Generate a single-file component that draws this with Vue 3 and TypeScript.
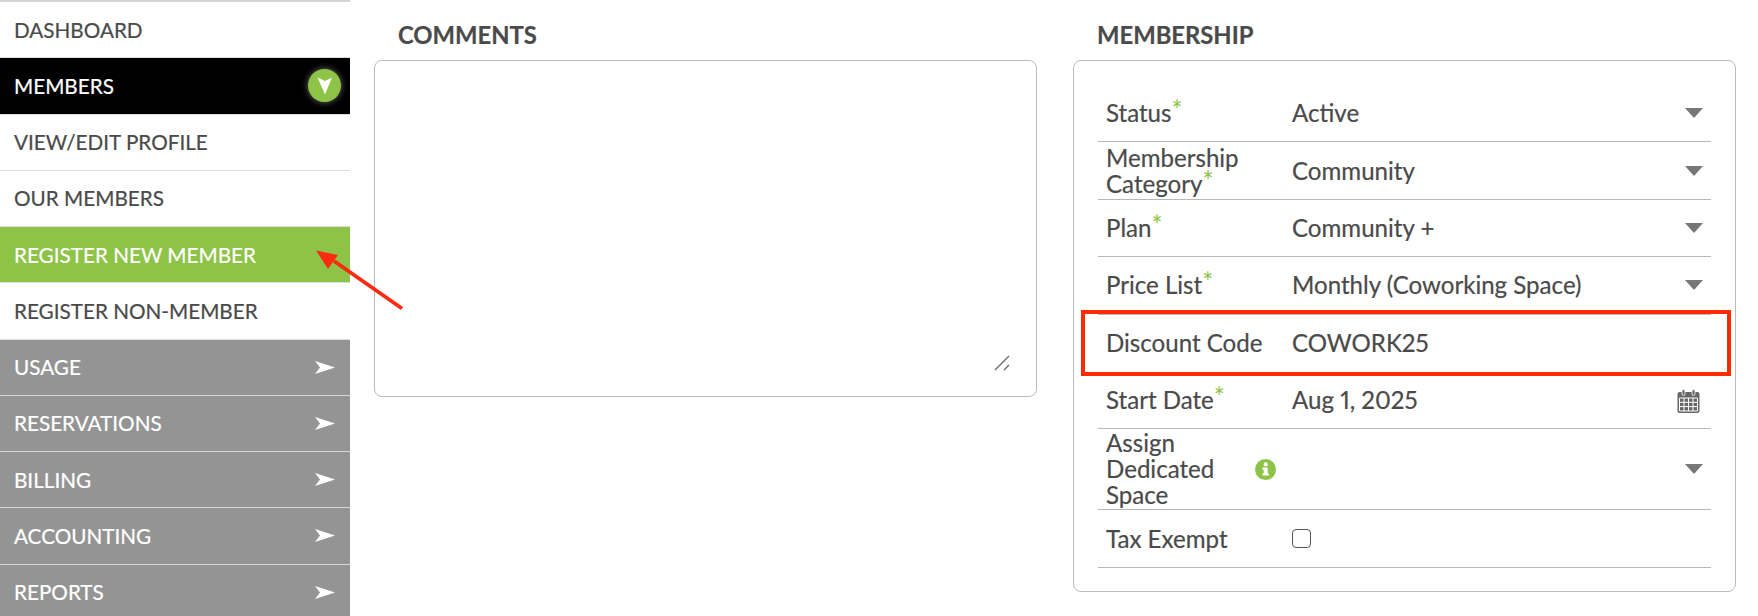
<template>
  <div class="page">
    <nav class="sidebar">
      <div
        v-for="item in navItems"
        :key="item.label"
        class="nav-item"
        :class="item.kind"
      >
        <span>{{ item.label }}</span>
        <span v-if="item.kind === 'active'" class="open-badge">
          <svg width="16" height="18" viewBox="0 0 16 18"><path d="M0.5 0.5 L8 4 L15 0.5 L8 17.5 Z" fill="#fff" /></svg>
        </span>
        <svg v-if="item.kind === 'section'" class="chevron" width="20" height="13" viewBox="0 0 20 13"><path d="M0 0 L20 6.5 L0 13 L5 6.5 Z" fill="#fff" /></svg>
      </div>
    </nav>

    <main class="content">
      <section class="column">
        <h2>COMMENTS</h2>
        <div class="card comments">
          <svg class="resize" width="16" height="16" viewBox="0 0 16 16">
            <path d="M1 15 L15 1 M10 15 L15 10" stroke="#666" stroke-width="1.3" fill="none" />
          </svg>
        </div>
      </section>

      <section class="column">
        <h2>MEMBERSHIP</h2>
        <div class="card membership">
          <div
            v-for="row in rows"
            :key="row.label"
            class="row"
            :class="{ tall: row.tall, flat: row.flat }"
          >
            <div class="label">
              <span class="label-text">{{ row.label }}<sup v-if="row.required">*</sup></span>
              <svg v-if="row.info" class="info" width="21" height="21" viewBox="0 0 21 21">
                <circle cx="10.5" cy="10.5" r="10.5" fill="#8dc346" />
                <circle cx="10.7" cy="5.4" r="2.1" fill="#fff" />
                <path d="M7.4 8.6 H12.7 V14.4 H14 V16.6 H7.4 V14.4 H8.7 V10.8 H7.4 Z" fill="#fff" />
              </svg>
            </div>
            <div class="value">
              <span>{{ row.value }}</span>
              <span v-if="row.control === 'checkbox'" class="checkbox"></span>
              <span v-if="row.control === 'select'" class="caret"></span>
              <svg v-if="row.control === 'date'" class="calendar" width="23" height="24" viewBox="0 0 23 24">
                <rect x="0.5" y="3" width="22" height="21" rx="2" fill="#666" />
                <rect x="5" y="0.5" width="3" height="6" rx="1.5" fill="#666" stroke="#fff" stroke-width="0.8" />
                <rect x="15" y="0.5" width="3" height="6" rx="1.5" fill="#666" stroke="#fff" stroke-width="0.8" />
                <path
                  d="M2.5 9 H20.5 V22 H2.5 Z M7 9 V22 M11.5 9 V22 M16 9 V22 M2.5 13.3 H20.5 M2.5 17.6 H20.5"
                  fill="none"
                  stroke="#fff"
                  stroke-width="1"
                />
              </svg>
            </div>
          </div>
        </div>
      </section>
    </main>

    <!-- red annotations drawn over the screenshot -->
    <div class="highlight"></div>
    <svg class="arrow" width="100" height="70" viewBox="0 0 100 70">
      <path d="M86 60.5 L18 13" stroke="#ff2a12" stroke-width="3.8" />
      <path d="M0 2.5 L22 7 L12 21 Z" fill="#ff2a12" />
    </svg>
  </div>
</template>

<script setup lang="ts">
interface NavItem {
  label: string;
  kind: 'plain' | 'active' | 'current' | 'section';
}

interface FormRow {
  label: string;
  value: string;
  required?: boolean;
  control?: 'select' | 'date' | 'checkbox';
  info?: boolean;
  tall?: boolean;
  flat?: boolean;
}

const navItems: NavItem[] = [
  { label: 'DASHBOARD', kind: 'plain' },
  { label: 'MEMBERS', kind: 'active' },
  { label: 'VIEW/EDIT PROFILE', kind: 'plain' },
  { label: 'OUR MEMBERS', kind: 'plain' },
  { label: 'REGISTER NEW MEMBER', kind: 'current' },
  { label: 'REGISTER NON-MEMBER', kind: 'plain' },
  { label: 'USAGE', kind: 'section' },
  { label: 'RESERVATIONS', kind: 'section' },
  { label: 'BILLING', kind: 'section' },
  { label: 'ACCOUNTING', kind: 'section' },
  { label: 'REPORTS', kind: 'section' },
];

const rows: FormRow[] = [
  { label: 'Status', value: 'Active', required: true, control: 'select' },
  { label: 'Membership Category', value: 'Community', required: true, control: 'select' },
  { label: 'Plan', value: 'Community +', required: true, control: 'select' },
  { label: 'Price List', value: 'Monthly (Coworking Space)', required: true, control: 'select' },
  { label: 'Discount Code', value: 'COWORK25', flat: true },
  { label: 'Start Date', value: 'Aug 1, 2025', required: true, control: 'date' },
  { label: 'Assign Dedicated Space', value: '', info: true, control: 'select', tall: true },
  { label: 'Tax Exempt', value: '', control: 'checkbox' },
];
</script>

<style scoped>
.page {
  position: relative;
  display: flex;
  width: 1758px;
  height: 616px;
  overflow: hidden;
  background: #fff;
  color: #4a4a4a;
  font-family: Lato, "Open Sans", sans-serif;
  font-variant-numeric: proportional-nums;
  font-feature-settings: "pnum" 1;
  -webkit-text-stroke: 0.2px;
}

.sidebar {
  flex: 0 0 350px;
  border-top: 2px solid #d4d4d4;
}

.nav-item {
  display: flex;
  align-items: center;
  justify-content: space-between;
  box-sizing: border-box;
  height: 56.25px;
  padding: 0 9px 0 14px;
  border-bottom: 1px solid #ddd;
  font-size: 20.7px;
}

.nav-item.active {
  background: #000;
  color: #fff;
}

.nav-item.current {
  background: #8dc346;
  color: #fff;
}

.nav-item.section {
  background: #949494;
  color: #fff;
  border-bottom-color: #d8d8d8;
}

.open-badge {
  display: flex;
  align-items: center;
  justify-content: center;
  width: 33px;
  height: 33px;
  border-radius: 50%;
  background: #8dc346;
  box-shadow: 0 0 6px rgba(255, 255, 255, 0.45);
}

.chevron {
  margin-right: 6px;
}

.content {
  display: flex;
  gap: 36px;
  padding-left: 24px;
}

.column {
  width: 663px;
}

h2 {
  height: 60px;
  margin: 0;
  padding: 22px 0 0 24px;
  box-sizing: border-box;
  font-size: 23.8px;
  line-height: 26px;
  font-weight: 700;
}

.card {
  box-sizing: border-box;
  border: 1px solid #bbb;
  border-radius: 8px;
}

.comments {
  position: relative;
  height: 337px;
}

.resize {
  position: absolute;
  right: 26px;
  bottom: 25px;
}

.membership {
  height: 532px;
  padding: 24px 24px 0;
}

.row {
  display: flex;
  align-items: center;
  box-sizing: border-box;
  height: 57.4px;
  border-bottom: 1px solid #b8b8b8;
  font-size: 24.1px;
  line-height: 26px;
}

.row.tall {
  height: 81px;
}

.row.flat {
  border-bottom-color: transparent;
}

.label {
  display: flex;
  align-items: center;
  flex: 0 0 194px;
  box-sizing: border-box;
  padding-left: 8px;
  padding-right: 16px;
}

.label-text {
  flex: 1;
  max-width: 160px;
}

sup {
  color: #8dc346;
  font-size: 26px;
  line-height: 0;
  vertical-align: 2px;
  -webkit-text-stroke: 0;
}

.info {
  margin-left: auto;
}

.value {
  display: flex;
  align-items: center;
  justify-content: space-between;
  flex: 1;
  padding-right: 8px;
}

.caret {
  width: 0;
  height: 0;
  margin-left: auto;
  border-left: 9.5px solid transparent;
  border-right: 9.5px solid transparent;
  border-top: 10px solid #777;
}

.calendar {
  position: relative;
  top: 1px;
  margin-right: 3px;
}

.checkbox {
  box-sizing: border-box;
  width: 19px;
  height: 19px;
  margin-right: auto;
  border: 1px solid #555;
  border-radius: 4px;
}

.highlight {
  position: absolute;
  left: 1081px;
  top: 310px;
  box-sizing: border-box;
  width: 650px;
  height: 66px;
  border: 4px solid #ff2a00;
}

.arrow {
  position: absolute;
  left: 316px;
  top: 248px;
}
</style>

<style>
html,
body {
  margin: 0;
  background: #fff;
}
</style>
